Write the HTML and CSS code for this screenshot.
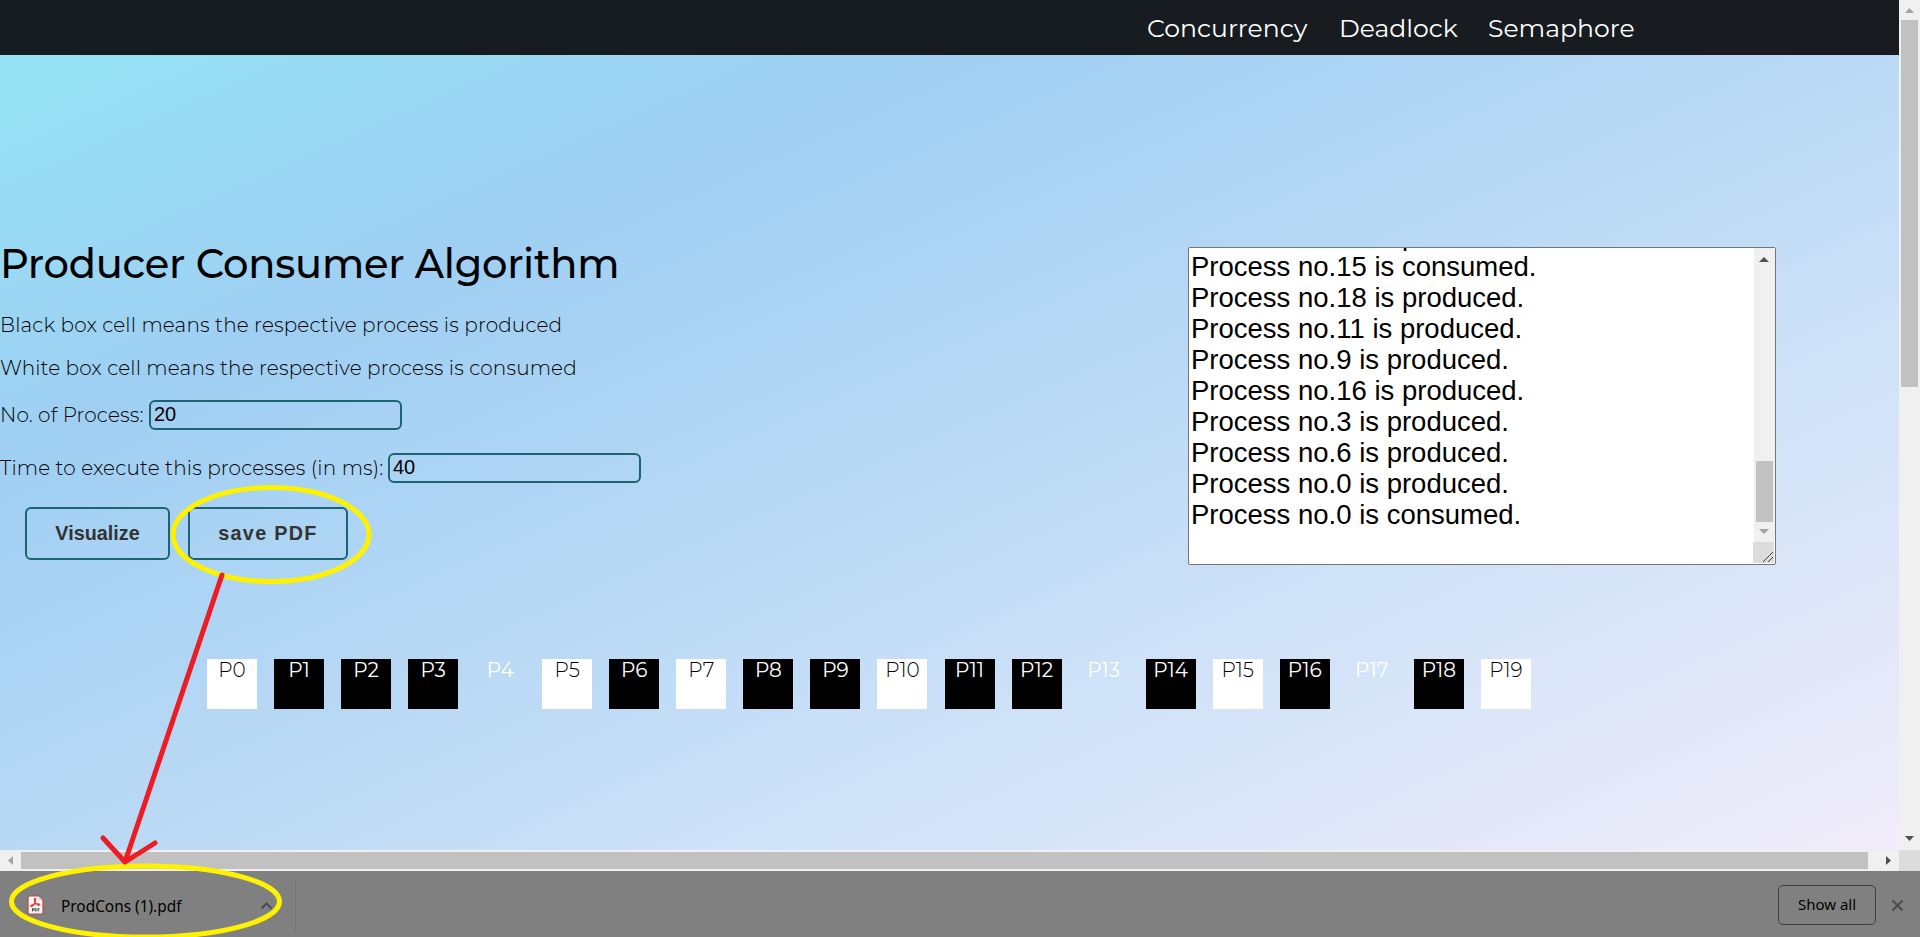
FILE: index.html
```html
<!DOCTYPE html>
<html lang="en">
<head>
<meta charset="utf-8">
<title>Producer Consumer Algorithm</title>
<link rel="stylesheet" href="styles.css">
</head>
<body>
<div class="window">
  <div class="viewport">
    <div class="page">
      <nav class="nav"><a class="n1">Concurrency</a><a class="n2">Deadlock</a><a class="n3">Semaphore</a></nav>
      <main class="main">
        <section class="controls">
          <h1><span>Producer Consumer Algorithm</span></h1>
          <p class="black-note">Black box cell means the respective process is produced</p>
          <p class="white-note">White box cell means the respective process is consumed</p>
          <div class="field"><label class="count">No. of Process:</label><div class="input">20</div></div>
          <div class="field second"><label class="time">Time to execute this processes (in ms):</label><div class="input">40</div></div>
          <div class="buttons"><button class="visualize">Visualize</button><button class="save">save PDF</button></div>
        </section>
        <div class="log">
          <div class="lines">
            <div>Process no.15 is produced.</div>
            <div>Process no.15 is consumed.</div>
            <div>Process no.18 is produced.</div>
            <div>Process no.11 is produced.</div>
            <div>Process no.9 is produced.</div>
            <div>Process no.16 is produced.</div>
            <div>Process no.3 is produced.</div>
            <div>Process no.6 is produced.</div>
            <div>Process no.0 is produced.</div>
            <div>Process no.0 is consumed.</div>
          </div>
          <svg class="logbar" width="22" height="316" viewBox="0 0 22 316"><path fill="#f0f0f0" d="M1 0h21v294H1z"/><path fill="#505050" d="M6 14h10l-5-5z"/><path fill="#c1c1c1" d="M3 213h17v61H3z"/><path fill="#a3a3a3" d="M6 281h10l-5 5z"/><path fill="#dcdcdc" d="M0 294h21v21H0z"/><path stroke="#404040" fill="none" d="M10 314l10-10M15 314l5-5"/></svg>
        </div>
      </main>
      <div class="cells">
        <div class="cell used">P0</div><div class="cell">P1</div><div class="cell">P2</div><div class="cell">P3</div><div class="cell idle">P4</div><div class="cell used">P5</div><div class="cell">P6</div><div class="cell used">P7</div><div class="cell">P8</div><div class="cell">P9</div><div class="cell used">P10</div><div class="cell">P11</div><div class="cell">P12</div><div class="cell idle">P13</div><div class="cell">P14</div><div class="cell used">P15</div><div class="cell">P16</div><div class="cell idle">P17</div><div class="cell">P18</div><div class="cell used">P19</div>
      </div>
    </div>
    <svg class="vbar" width="21" height="850" viewBox="0 0 21 850"><path fill="#f0f0f0" d="M0 0h21v850H0z"/><path fill="#a3a3a3" d="M6 13h9l-4.500-5z"/><path fill="#c1c1c1" d="M2 20h17v367H2z"/><path fill="#505050" d="M6 836h9l-4.500 5z"/></svg>
    <svg class="hbar" width="1899" height="21" viewBox="0 0 1899 21"><path fill="#f0f0f0" d="M0 0h1899v21H0z"/><path fill="#a3a3a3" d="M13 6v9l-5-4.500z"/><path fill="#c1c1c1" d="M21 2h1847v17H21z"/><path fill="#505050" d="M1886 6v9l5-4.500z"/></svg>
    <div class="corner"></div>
  </div>
  <footer class="shelf">
    <div class="download">
      <svg width="17" height="20" viewBox="0 0 17 20"><path d="M2.500 1h9L16 5.500v12a1.500 1.500 0 0 1-1.500 1.500h-12A1.500 1.500 0 0 1 1 17.500v-15A1.500 1.500 0 0 1 2.500 1z" fill="#f5f5f5" stroke="#c5463c" stroke-width="1.200"/><path d="M11.500 1v4.500H16z" fill="#d9d9d9"/><path d="M8 3.500c1.200 0 .4 2.500 0 3.700C7 9.500 5 11.500 4 11.300c-1.200-.6 2-2 4.500-2.400 2-.3 4.500 0 4 1-.8 1-3.300-.6-4.400-2.600C7.300 6 7.200 3.500 8 3.500z" fill="none" stroke="#ee3a38" stroke-width="1.300"/><path d="M5.500 16.500v-3h1.300v1.600H5.500M8 13.500v2.500h1l.7-1.300-.7-1.200zM11 16.500v-3h1.500m-1.500 1.500h1.300" fill="none" stroke="#333" stroke-width=".8"/></svg>
      <span class="filename">ProdCons (1).pdf</span>
      <svg class="chevron" width="13" height="9" viewBox="0 0 13 9"><path d="M1.500 7.500l5-5 5 5" fill="none" stroke="#4b4b4b" stroke-width="2"/></svg>
    </div>
    <div class="showall">Show all</div>
    <svg class="close" width="13" height="13" viewBox="0 0 13 13"><path d="M1.500 1.500l10 10m0-10l-10 10" stroke="#4b4b4b" stroke-width="2.200"/></svg>
  </footer>
  <svg class="marks" width="1920" height="937" viewBox="0 0 1920 937" fill="none" stroke-width="5" stroke-linecap="round" stroke-linejoin="round"><g stroke="#fff200"><ellipse cx="271" cy="534.500" rx="98" ry="47"/><ellipse cx="145.500" cy="901.500" rx="134" ry="35.500"/></g><path stroke="#ed1c24" d="M222 575L125 862M103 838l22 24 30-19"/></svg>
</div>
</body>
</html>
```
FILE: styles.css
```css
* { box-sizing: border-box; }
body { margin: 0; overflow: hidden; font-family: Montserrat, Inter, sans-serif; }
.window { position: relative; width: 1920px; height: 937px; display: flex; flex-direction: column; }
.viewport { display: grid; grid-template-columns: 1899px 21px; grid-template-rows: 850px 21px; }
.viewport > svg { display: block; }
.corner { background: #dcdcdc; }
.page { overflow: hidden; background: linear-gradient(156deg, #92e6f4 0%, #9fcff3 27%, #b9d9f5 52%, #cfe2f8 70%, #f1ecf9 100%); }
.nav { height: 55px; display: flex; padding-left: 1147px; background: linear-gradient(90deg, #141c1f, #191b20); color: #fff; font-size: 25.100px; line-height: 57px; white-space: nowrap; }
.nav a { flex: none; }
.n1 { width: 192px; }
.n2 { width: 149px; }
.main { display: flex; justify-content: space-between; height: 604px; padding: 192px 123px 0 0; }
.controls { font-size: 20px; font-weight: 300; letter-spacing: .150px; white-space: nowrap; }
h1 { margin: -7px 0 0; font-size: 40px; font-weight: 500; line-height: 48px; letter-spacing: -.250px; }
p { margin: 0; line-height: 24px; }
.black-note { margin-top: 25px; }
.white-note { margin-top: 19px; }
.field { display: flex; align-items: center; height: 31px; margin-top: 19px; }
.field.second { margin-top: 22px; }
.count { width: 149px; }
.time { width: 388px; }
.input { width: 253px; height: 30px; border: 2px solid #1d6472; border-radius: 6px; padding-left: 3px; font: 20px/25px "Liberation Sans", sans-serif; letter-spacing: 0; }
.buttons { display: flex; gap: 18px; padding: 24px 0 0 25px; }
button { height: 53px; padding: 0; border: 2px solid #1d6472; border-radius: 6px; background: none; color: #333; font: bold 19.800px "Liberation Sans", sans-serif; }
.visualize { width: 145px; }
.save { width: 160px; letter-spacing: 1.300px; }
.log { display: flex; justify-content: space-between; width: 588px; height: 318px; overflow: hidden; border: 1px solid #767676; border-radius: 2px; background: #fff; }
.lines { margin-top: -28px; padding-left: 2px; font: 27.500px/31px "Liberation Sans", sans-serif; white-space: nowrap; }
.logbar { flex: none; }
.cells { display: flex; gap: 17.050px; padding-left: 207px; }
.cell { flex: none; width: 50px; height: 50px; background: #000; color: #fff; text-align: center; font-size: 20px; line-height: 22px; }
.cell.used { background: #fff; color: #000; font-weight: 300; }
.cell.idle { background: none; }
.shelf { display: flex; align-items: center; height: 66px; background: #808080; color: #000; font-family: "Noto Sans", sans-serif; }
.download { display: flex; align-items: center; width: 296px; height: 54px; margin-top: 4px; padding-left: 27px; border-right: 1px solid #767676; }
.download > svg:first-child { margin-top: -2px; }
.filename { width: 199px; margin: 1px 0 0 17px; font-size: 15.400px; }
.chevron { margin-top: -1px; }
.showall { width: 98px; height: 40px; margin: 1px 15px 0 auto; border: 1px solid #3c4043; border-radius: 5px; text-align: center; font-size: 15px; line-height: 36px; font-weight: 400; }
.close { margin: 2px 16px 0 0; }
.marks { position: absolute; left: 0; top: 0; }
```
